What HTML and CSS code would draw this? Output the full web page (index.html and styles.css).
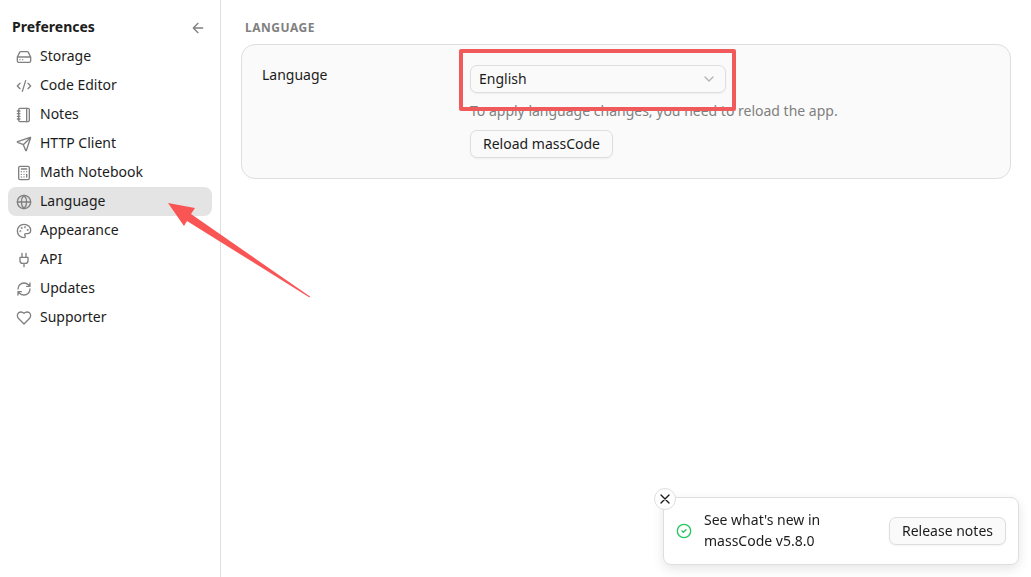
FILE: index.html
```html
<!DOCTYPE html>
<html lang="en">
<head>
<meta charset="utf-8">
<meta name="viewport" content="width=device-width, initial-scale=1">
<title>Preferences</title>
<link rel="stylesheet" href="styles.css">
</head>
<body>
<div class="app">
  <aside class="sidebar">
    <header class="sidebar-header">
      <h1 class="sidebar-title">Preferences</h1>
      <button class="back" type="button" aria-label="Back">
        <svg class="icon" viewBox="0 0 24 24"><path d="m12 19-7-7 7-7M19 12H5"/></svg>
      </button>
    </header>
    <nav class="nav">
      <a class="nav-item" href="#storage"><svg class="icon" viewBox="0 0 24 24"><path d="M22 12H2M5.45 5.11 2 12v6a2 2 0 0 0 2 2h16a2 2 0 0 0 2-2v-6l-3.45-6.89A2 2 0 0 0 16.76 4H7.24a2 2 0 0 0-1.79 1.11zM6 16h.01M10 16h.01"/></svg><span>Storage</span></a>
      <a class="nav-item" href="#editor"><svg class="icon" viewBox="0 0 24 24"><path d="m18 16 4-4-4-4M6 8l-4 4 4 4M14.5 4l-5 16"/></svg><span>Code Editor</span></a>
      <a class="nav-item" href="#notes"><svg class="icon" viewBox="0 0 24 24"><path d="M2 6h4M2 10h4M2 14h4M2 18h4M16 2v20"/><rect x="4" y="2" width="16" height="20" rx="2"/></svg><span>Notes</span></a>
      <a class="nav-item" href="#http"><svg class="icon" viewBox="0 0 24 24"><path d="M14.536 21.686a.5.5 0 0 0 .937-.024l6.5-19a.496.496 0 0 0-.635-.635l-19 6.5a.5.5 0 0 0-.024.937l7.93 3.18a2 2 0 0 1 1.112 1.11zM21.854 2.147l-10.94 10.939"/></svg><span>HTTP Client</span></a>
      <a class="nav-item" href="#math"><svg class="icon" viewBox="0 0 24 24"><rect x="4" y="2" width="16" height="20" rx="2"/><path d="M8 6h8M16 14v4M16 10h.01M12 10h.01M8 10h.01M12 14h.01M8 14h.01M12 18h.01M8 18h.01"/></svg><span>Math Notebook</span></a>
      <a class="nav-item active" href="#language" aria-current="page"><svg class="icon" viewBox="0 0 24 24"><circle cx="12" cy="12" r="10"/><path d="M12 2a14.5 14.5 0 0 0 0 20 14.5 14.5 0 0 0 0-20M2 12h20"/></svg><span>Language</span></a>
      <a class="nav-item" href="#appearance"><svg class="icon" viewBox="0 0 24 24"><path d="M12 22a1 1 0 0 1 0-20 10 9 0 0 1 10 9 5 5 0 0 1-5 5h-2.25a1.75 1.75 0 0 0-1.4 2.8l.3.4a1.75 1.75 0 0 1-1.4 2.8z"/><circle cx="13.5" cy="6.5" r=".5"/><circle cx="17.5" cy="10.5" r=".5"/><circle cx="6.5" cy="12.5" r=".5"/><circle cx="8.5" cy="7.5" r=".5"/></svg><span>Appearance</span></a>
      <a class="nav-item" href="#api"><svg class="icon" viewBox="0 0 24 24"><path d="M12 22v-5M9 8V2M15 8V2M18 8v5a4 4 0 0 1-4 4h-4a4 4 0 0 1-4-4V8Z"/></svg><span>API</span></a>
      <a class="nav-item" href="#updates"><svg class="icon" viewBox="0 0 24 24"><path d="M3 12a9 9 0 0 1 9-9 9.75 9.75 0 0 1 6.74 2.74L21 8M21 3v5h-5M21 12a9 9 0 0 1-9 9 9.75 9.75 0 0 1-6.74-2.74L3 16M8 16H3v5"/></svg><span>Updates</span></a>
      <a class="nav-item" href="#supporter"><svg class="icon" viewBox="0 0 24 24"><path d="M19 14c1.49-1.46 3-3.21 3-5.5A5.5 5.5 0 0 0 16.5 3c-1.76 0-3 .5-4.5 2-1.5-1.5-2.74-2-4.5-2A5.5 5.5 0 0 0 2 8.5c0 2.3 1.5 4.05 3 5.5l7 7Z"/></svg><span>Supporter</span></a>
    </nav>
  </aside>

  <main class="content">
    <h2 class="section-title">Language</h2>
    <section class="card">
      <label class="field-label" for="language">Language</label>
      <div class="field">
        <div class="select-wrap">
          <select class="select" id="language"><option>English</option></select>
          <svg class="icon chevron" viewBox="0 0 24 24"><path d="m6 9 6 6 6-6"/></svg>
          <span class="highlight"></span>
        </div>
        <p class="hint">To apply language changes, you need to reload the app.</p>
        <button class="button" type="button">Reload massCode</button>
      </div>
    </section>
  </main>
</div>

<svg class="pointer" viewBox="0 0 144 96" aria-hidden="true"><path d="M0 0 27 5 23 11 142 93.500 141.500 94.500 19 18 16 23Z"/></svg>

<div class="toast" role="status">
  <button class="close" type="button" aria-label="Close"><svg class="icon" viewBox="0 0 24 24"><path d="M18 6 6 18M6 6l12 12"/></svg></button>
  <svg class="icon success" viewBox="0 0 24 24"><circle cx="12" cy="12" r="10"/><path d="m9 12 2 2 4-4"/></svg>
  <p class="toast-text">See what's new in massCode v5.8.0</p>
  <button class="button" type="button">Release notes</button>
</div>
</body>
</html>
```
FILE: styles.css
```css
* {
  box-sizing: border-box;
}

body {
  margin: 0;
  background: #fff;
  color: #1c1c1c;
  font: 14px/20px "Noto Sans", "Open Sans", sans-serif;
}

h1, h2, p {
  margin: 0;
}

button, select {
  font: inherit;
  color: inherit;
}

.icon {
  width: 16px;
  height: 16px;
  flex: none;
  fill: none;
  stroke: currentColor;
  stroke-width: 2;
  stroke-linecap: round;
  stroke-linejoin: round;
}

.app {
  display: flex;
  min-height: 100vh;
}

.sidebar {
  flex: none;
  width: 221px;
  padding: 14px 8px;
  border-right: 1px solid #dedede;
}

.sidebar-header {
  display: flex;
  align-items: center;
  justify-content: space-between;
  height: 28px;
  padding: 0 6px 0 4px;
}

.sidebar-title {
  font-size: 14px;
  line-height: 18px;
  padding-bottom: 2px;
  font-weight: 700;
}

.back {
  display: flex;
  padding: 0;
  border: 0;
  background: none;
  color: #808080;
}

.nav {
  display: flex;
  flex-direction: column;
}

.nav-item {
  display: flex;
  align-items: center;
  gap: 8px;
  height: 29px;
  padding: 0 8px 2px;
  border-radius: 8px;
  color: inherit;
  text-decoration: none;
}

.nav-item .icon {
  margin-top: 3px;
  color: #808080;
}

.active {
  background: #e4e4e4;
}

.content {
  flex: 1;
  padding: 18px 20px;
}

.section-title {
  padding: 1px 4px 0;
  margin-bottom: 7px;
  color: #808080;
  font-size: 12px;
  line-height: 18px;
  font-weight: 700;
  text-transform: uppercase;
  letter-spacing: 0.5px;
}

.card {
  display: grid;
  grid-template-columns: 192px 1fr;
  gap: 16px;
  padding: 20px;
  background: #fafafa;
  border: 1px solid #dedede;
  border-radius: 14px;
}

.field {
  display: flex;
  flex-direction: column;
  align-items: flex-start;
}

.select-wrap {
  position: relative;
  width: 256px;
}

.select {
  display: block;
  appearance: none;
  width: 100%;
  height: 28px;
  padding: 0 8px 1px;
  background: #fafafa;
  border: 1px solid #dedede;
  border-radius: 7px;
  box-shadow: 0 1px 2px rgba(0, 0, 0, 0.05);
}

.chevron {
  position: absolute;
  top: 6px;
  right: 9px;
  color: #b4b4b4;
}

.highlight {
  position: absolute;
  inset: -16px -10px -18px -11px;
  border: 4px solid #f05a5a;
  border-radius: 2px;
  pointer-events: none;
}

.hint {
  margin: 8px 0 9px;
  color: #808080;
}

.button {
  flex: none;
  height: 28px;
  padding: 0 12px;
  background: #fafafa;
  border: 1px solid #dedede;
  border-radius: 7px;
  line-height: 20px;
  box-shadow: 0 1px 2px rgba(0, 0, 0, 0.05);
}

.pointer {
  position: absolute;
  left: 168px;
  top: 203px;
  width: 144px;
  height: 96px;
  fill: #fa5555;
  pointer-events: none;
}

.toast {
  position: fixed;
  right: 12px;
  bottom: 12px;
  display: flex;
  align-items: center;
  gap: 12px;
  width: 356px;
  height: 68px;
  padding: 0 12px;
  background: #fff;
  border: 1px solid #dedede;
  border-radius: 8px;
  box-shadow: 0 4px 12px rgba(0, 0, 0, 0.1);
}

.close {
  position: absolute;
  left: -10px;
  top: -10px;
  display: flex;
  align-items: center;
  justify-content: center;
  width: 22px;
  height: 22px;
  padding: 0;
  background: #fff;
  border: 1px solid #dedede;
  border-radius: 50%;
}

.success {
  color: #22c55e;
}

.toast-text {
  flex: 1;
  padding: 0 40px 2px 0;
  line-height: 21px;
}
```
